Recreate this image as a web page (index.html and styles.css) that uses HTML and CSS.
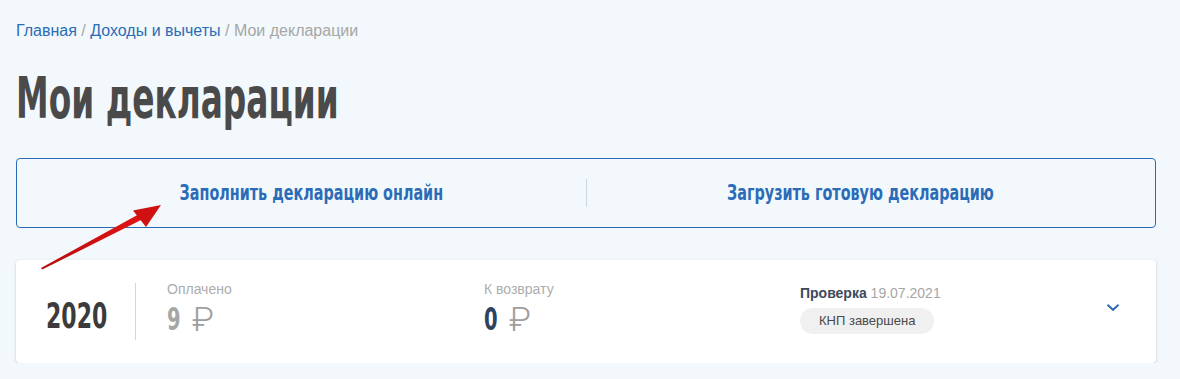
FILE: index.html
```html
<!DOCTYPE html>
<html lang="ru">
<head>
  <meta charset="UTF-8">
  <meta name="viewport" content="width=device-width, initial-scale=1.0">
  <title>Мои декларации</title>
  <link rel="stylesheet" href="styles.css">
</head>
<body>
  <main class="page">
    <nav class="crumbs">
      <a class="crumbs__link" href="#">Главная</a>
      <span class="crumbs__sep">/</span>
      <a class="crumbs__link" href="#">Доходы и вычеты</a>
      <span class="crumbs__sep">/</span>
      <span class="crumbs__current">Мои декларации</span>
    </nav>

    <h1 class="title"><span class="condensed">Мои декларации</span></h1>

    <div class="actions">
      <a class="actions__item actions__item--left" href="#"><span class="condensed">Заполнить декларацию онлайн</span></a>
      <span class="actions__divider"></span>
      <a class="actions__item actions__item--right" href="#"><span class="condensed">Загрузить готовую декларацию</span></a>
    </div>

    <div class="decl">
      <div class="decl__year"><span class="condensed">2020</span></div>
      <div class="decl__sum decl__sum--paid">
        <div class="decl__label">Оплачено</div>
        <div class="decl__value decl__value--muted"><span class="condensed">9</span><span class="rub">₽</span></div>
      </div>
      <div class="decl__sum decl__sum--refund">
        <div class="decl__label">К возврату</div>
        <div class="decl__value"><span class="condensed">0</span><span class="rub">₽</span></div>
      </div>
      <div class="decl__status">
        <div class="decl__check"><b>Проверка</b> <span class="decl__date">19.07.2021</span></div>
        <span class="badge">КНП завершена</span>
      </div>
      <button class="decl__toggle" type="button" aria-label="Развернуть">
        <svg width="14" height="9" viewBox="0 0 14 9"><path d="M1.5 1.8 7 6.8l5.5-5" fill="none" stroke="#2b6cb8" stroke-width="2"/></svg>
      </button>
    </div>

    <!-- red pointer drawn over the page -->
    <svg class="pointer" width="140" height="80" viewBox="0 0 140 80">
      <defs>
        <linearGradient id="arrowFill" x1="0" y1="1" x2="1" y2="0">
          <stop offset="0" stop-color="#b50d0d"/>
          <stop offset="1" stop-color="#e41414"/>
        </linearGradient>
      </defs>
      <path d="M1 66 L2.2 67.6 L104 16.5 L101 11 Z" fill="url(#arrowFill)"/>
      <path d="M121 3 L93 8.5 L106 25 Z" fill="#d01111"/>
    </svg>
  </main>
</body>
</html>
```

FILE: styles.css
```css
:root {
  --blue: #2b6cb8;
  --text: #4a4a4a;
  --muted: #a6a6a6;
  --bg: #f2f8fb;
}
* {
  box-sizing: border-box;
}
body {
  margin: 0;
  background-color: var(--bg);
  font-family: Arial, "Liberation Sans", sans-serif;
  color: var(--text);
}
.page {
  position: relative;
  padding: 21px 24px 0 16px;
}
.condensed {
  display: inline-block;
  font-family: "DejaVu Sans Condensed", "DejaVu Sans", sans-serif;
  font-weight: bold;
  transform: scaleX(.68);
  transform-origin: left center;
}
.crumbs {
  font-size: 16px;
  line-height: 20px;
  color: var(--muted);
}
.crumbs__link {
  color: var(--blue);
  text-decoration: none;
}
.title {
  margin: 25px 0 0;
  font-weight: normal;
  font-size: 57px;
  line-height: 64px;
  color: #4a4a4a;
  white-space: nowrap;
}
.title .condensed {
  transform: scaleX(.64);
}
.actions {
  display: flex;
  align-items: center;
  height: 70px;
  margin-top: 28px;
  border: 1px solid var(--blue);
  border-radius: 4px;
}
.actions__item {
  flex: 1;
  text-align: center;
  font-size: 21px;
  color: var(--blue);
  text-decoration: none;
  white-space: nowrap;
}
.actions__item--left {
  padding-left: 20px;
}
.actions__item--right {
  padding-right: 20px;
}
.actions__item .condensed {
  transform: scaleX(.76);
  transform-origin: center;
}
.actions__divider {
  width: 1px;
  height: 28px;
  background-color: #cfd8e0;
}
.decl {
  display: flex;
  align-items: center;
  height: 103px;
  margin-top: 32px;
  padding: 0 30px;
  background-color: #fff;
  border-radius: 4px;
  box-shadow: 0 1px 3px rgba(60, 80, 110, .28);
}
.decl__year {
  width: 90px;
  padding-top: 4px;
  font-size: 36px;
  color: #3b3b3b;
  border-right: 1px solid #d5d5d5;
  height: 57px;
  line-height: 57px;
}
.decl__sum {
  padding-bottom: 6px;
}
.decl__sum--paid {
  flex: 0 0 348px;
  padding-left: 31px;
}
.decl__sum--refund {
  flex: 0 0 316px;
}
.decl__label {
  font-size: 14px;
  color: #adadad;
}
.decl__value {
  display: flex;
  align-items: center;
  gap: 5px;
  margin-top: 4px;
  font-size: 32px;
  line-height: 36px;
  color: #2d4461;
}
.decl__value--muted {
  color: var(--muted);
}
.rub {
  font-family: Roboto, sans-serif;
  font-size: 34px;
  font-weight: 300;
  color: #9e9e9e;
}
.decl__status {
  flex: 1;
  padding-bottom: 4px;
}
.decl__check {
  font-size: 14px;
  color: var(--muted);
}
.decl__check b {
  color: #3d4a5c;
}
.badge {
  display: inline-block;
  margin-top: 7px;
  padding: 0 19px;
  height: 26px;
  line-height: 26px;
  font-size: 13px;
  color: #4a4a4a;
  background-color: #f0f0f0;
  border-radius: 13px;
}
.decl__toggle {
  margin: 0 6px 8px 0;
  padding: 0;
  border: 0;
  background: none;
}
.pointer {
  position: absolute;
  left: 40px;
  top: 202px;
}
```
